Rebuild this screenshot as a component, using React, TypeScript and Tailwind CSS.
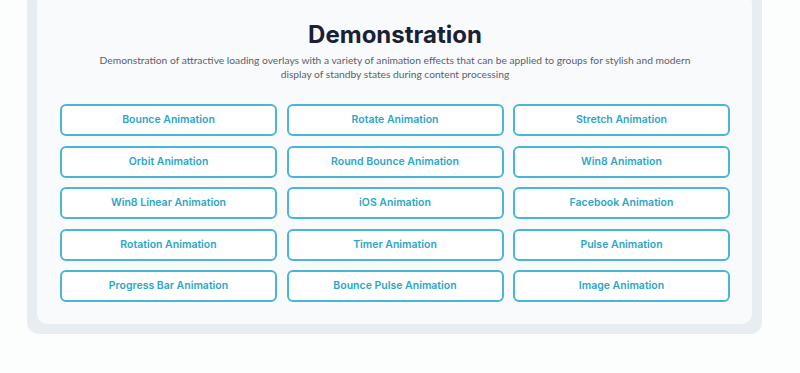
const items = [
  "Bounce Animation",
  "Rotate Animation",
  "Stretch Animation",
  "Orbit Animation",
  "Round Bounce Animation",
  "Win8 Animation",
  "Win8 Linear Animation",
  "iOS Animation",
  "Facebook Animation",
  "Rotation Animation",
  "Timer Animation",
  "Pulse Animation",
  "Progress Bar Animation",
  "Bounce Pulse Animation",
  "Image Animation",
];

export default function App() {
  return (
    <div className="w-[800px] h-[373px] overflow-hidden bg-[#fcfdfd]">
      <div className="ml-[27px] w-[735px] -mt-[16px] rounded-[12px] bg-[#e8edf1] p-[10px]">
        <div className="rounded-[10px] bg-[#f8fafb] pl-[23px] pr-[22px] pt-[26px] pb-[22px]">
          <h1 className="text-center text-[24px] leading-[30px] font-bold text-[#1a2035] font-['Inter',sans-serif]">
            Demonstration
          </h1>
          <p className="mx-auto mt-[3px] max-w-[600px] text-center text-[10.25px] leading-[14px] text-[#5a5f6e] font-['Lato',sans-serif]">
            Demonstration of attractive loading overlays with a variety of animation effects that can be applied to groups for stylish and modern display of standby states during content processing
          </p>
          <div className="mt-[23px] grid grid-cols-3 gap-x-[9.5px] gap-y-[9.5px]">
            {items.map((label) => (
              <button
                key={label}
                className="h-[32px] rounded-[6px] border-2 border-[#4ab6d5] bg-white text-[10.5px] font-semibold text-[#2ba6c9] font-['Inter',sans-serif]"
              >
                {label}
              </button>
            ))}
          </div>
        </div>
      </div>
    </div>
  );
}
